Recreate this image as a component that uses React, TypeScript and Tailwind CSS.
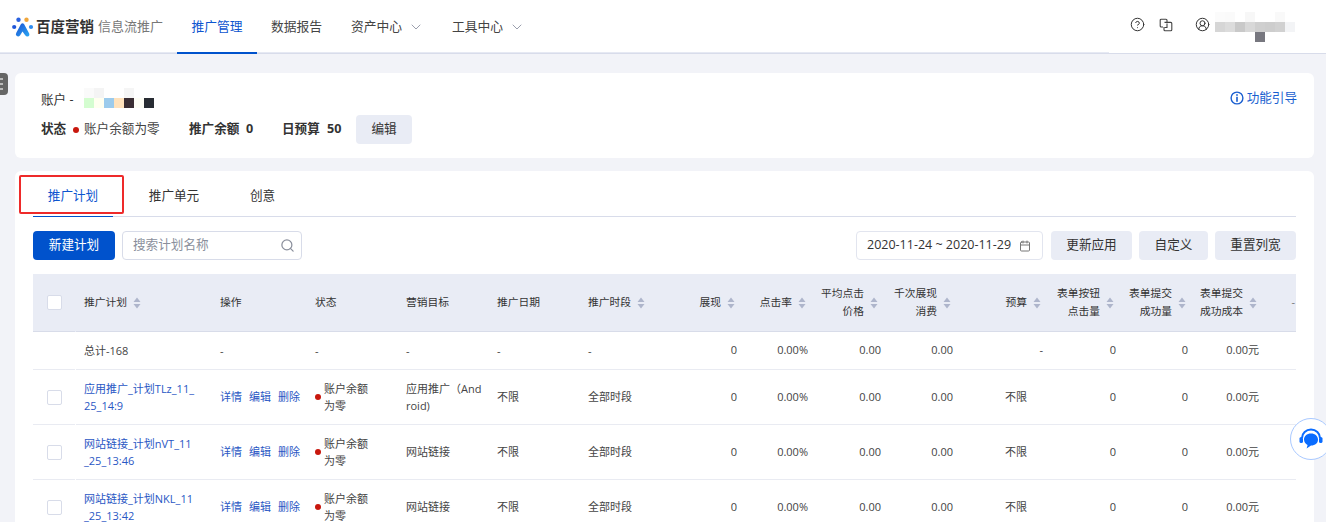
import { CircleHelp, CircleUserRound, ChevronDown, Search, Calendar } from "lucide-react";

const GRID = "grid grid-cols-[43px_136px_95px_91px_91px_91px_91px_74px_71px_73px_72px_90px_73px_72px_72px_28px]";
const CELL = "border-b border-[#e9ebf2] flex items-center";

function Sort() {
  return (
    <svg width="8" height="12" viewBox="0 0 8 12" className="shrink-0">
      <path d="M4 0.5 L7.5 5 H0.5 Z M4 11.5 L0.5 7 H7.5 Z" fill="#aeb5cb" />
    </svg>
  );
}

function Logo() {
  return (
    <svg width="22" height="22" viewBox="0 0 22 22" className="shrink-0">
      <defs>
        <linearGradient id="lg" x1="0" y1="0" x2="1" y2="1">
          <stop offset="0" stopColor="#1d4fd0" />
          <stop offset="1" stopColor="#29a8f5" />
        </linearGradient>
      </defs>
      <circle cx="6.5" cy="3.8" r="2.2" fill="#2a62e0" />
      <circle cx="14.5" cy="3.8" r="2.2" fill="#f0a63c" />
      <circle cx="2.2" cy="11" r="2.1" fill="#1f56d8" />
      <circle cx="19" cy="11" r="2.1" fill="#2f8cf0" />
      <path d="M9 8 Q10.5 6.6 12 8 L17.2 17.5 Q18 20 15.5 20.5 Q14 20.5 13 19 L10.5 15.5 L8 19.5 Q6.5 21 4.8 20 Q3.2 18.8 4.2 17 Z" fill="url(#lg)" />
    </svg>
  );
}

function CopyIcon() {
  return (
    <svg width="14" height="14" viewBox="0 0 14 14" fill="none" stroke="#444" strokeWidth="1.1">
      <path d="M4 9H2.2A1 1 0 0 1 1.2 8V2.2A1 1 0 0 1 2.2 1.2H7A1 1 0 0 1 8 2.2V4" />
      <path d="M5.5 4.4H11.8A1 1 0 0 1 12.8 5.4V11.8A1 1 0 0 1 11.8 12.8H6A1 1 0 0 1 5 11.8V9" />
      <path d="M8 5.5V9.5H5.5" />
    </svg>
  );
}

function Mosaic({ rows, size = 10 }: { rows: string[][]; size?: number }) {
  return (
    <div className="flex flex-col">
      {rows.map((r, i) => (
        <div key={i} className="flex">
          {r.map((c, j) => (
            <div key={j} style={{ width: size, height: size, background: c }} />
          ))}
        </div>
      ))}
    </div>
  );
}

function Head({ children, sort = true, right = true, cls = "" }: { children: React.ReactNode; sort?: boolean; right?: boolean; cls?: string }) {
  return (
    <div className={`border-b border-[#d8dce9] flex items-center gap-[6px] text-[10.75px] leading-[17.5px] text-[#333] ${right ? "justify-end pr-[10px] text-right" : "pl-2"} ${cls}`}>
      <div>{children}</div>
      {sort && <Sort />}
    </div>
  );
}

function Num({ children, cls = "" }: { children: React.ReactNode; cls?: string }) {
  return <div className={`${CELL} justify-end pr-2 text-[11px] text-[#444] ${cls}`}>{children}</div>;
}

function Txt({ children, link = false }: { children: React.ReactNode; link?: boolean }) {
  return <div className={`${CELL} pl-2 text-[11px] leading-[17.5px] ${link ? "text-[#2a57c4]" : "text-[#444]"}`}>{children}</div>;
}

function Check() {
  return <div className="w-[15px] h-[15px] bg-white border border-[#d8dce9] rounded-[2px] ml-[14px]" />;
}

function Row({ l1, l2, goal }: { l1: string; l2: string; goal: React.ReactNode }) {
  return (
    <div className={`${GRID} h-[55px] shrink-0`}>
      <div className={`${CELL} mr-px`}><Check /></div>
      <Txt link><div>{l1}<br />{l2}</div></Txt>
      <div className={`${CELL} pl-2 gap-[7px] text-[11px] text-[#2a57c4]`}><span>详情</span><span>编辑</span><span>删除</span></div>
      <Txt>
        <span className="w-[6px] h-[6px] rounded-full bg-[#c8170d] mr-[3px] shrink-0" />
        <div>账户余额<br />为零</div>
      </Txt>
      <Txt><div>{goal}</div></Txt>
      <Txt>不限</Txt>
      <Txt>全部时段</Txt>
      <Num>0</Num>
      <Num>0.00%</Num>
      <Num>0.00</Num>
      <Num>0.00</Num>
      <div className={`${CELL} pl-[44px] text-[11px] text-[#444]`}>不限</div>
      <Num>0</Num>
      <Num>0</Num>
      <Num cls="pr-[9px]">0.00元</Num>
      <div className={CELL} />
    </div>
  );
}

export default function App() {
  return (
    <div className="relative h-[522px] w-[1326px] overflow-hidden bg-[#f2f3f8] text-[#333] font-['Open_Sans','Noto_Sans_CJK_SC',sans-serif]">
      {/* top bar */}
      <header className="relative h-[54px] bg-white border-b border-[#d8dcea] flex items-stretch pl-3">
        <div className="flex items-center w-[165px] shrink-0">
          <Logo />
          <span className="ml-[2px] text-[14.5px] font-bold text-[#333] whitespace-nowrap">百度营销</span>
          <span className="ml-[4px] text-[13px] text-[#777] whitespace-nowrap">信息流推广</span>
        </div>
        <nav className="flex items-stretch text-[12.75px] text-[#444]">
          <a className="w-[80px] flex items-center justify-center text-[#0d55cf] border-b-2 border-[#0052cc] h-[54px] pt-[2px] z-10">推广管理</a>
          <a className="ml-[14px] flex items-center">数据报告</a>
          <a className="ml-[29px] flex items-center gap-[6px]">资产中心<ChevronDown size={16} strokeWidth={1.3} color="#8b90a0" /></a>
          <a className="ml-[28px] flex items-center gap-[6px]">工具中心<ChevronDown size={16} strokeWidth={1.3} color="#8b90a0" /></a>
        </nav>
        <div className="ml-auto flex items-center pr-[31px]">
          <div className="mb-1"><CircleHelp size={15} color="#333" strokeWidth={1.6} /></div>
          <div className="ml-[14px] mb-1"><CopyIcon /></div>
          <div className="ml-[22px] mb-1"><CircleUserRound size={15} color="#333" strokeWidth={1.6} /></div>
          <div className="ml-[5px]">
            <Mosaic rows={[
              ["#fbfbfb", "#fafafa", "#ffffff", "#f7f7f7", "#ffffff", "#ffffff", "#f9f9f9", "#ffffff"],
              ["#d6d6d6", "#dcdcdc", "#c9c9c9", "#d8d8d8", "#cfcfcf", "#cdcdcd", "#d1d1d1", "#f3f4f6"],
              ["#ffffff", "#ffffff", "#ffffff", "#ffffff", "#77777f", "#ffffff", "#ffffff", "#ffffff"],
            ]} />
          </div>
        </div>
        <div className="absolute left-0 top-[52px] w-[1109px] h-px bg-[#e6e9f3]" />
      </header>

      {/* account card */}
      <section className="ml-[15px] mr-[12px] mt-[19px] h-[85px] bg-white rounded-[6px] pl-[26px] pr-[17px] flex flex-col">
        <div className="flex items-start">
          <div className="flex items-end pt-[15px] h-[35px] text-[12.6px]">
            <span className="w-[43px] leading-[16px]">账户 -</span>
            <Mosaic rows={[
              ["#fafafa", "#f4f4f4", "#ffffff", "#ffffff", "#f5f5f5", "#ffffff", "#ffffff"],
              ["#d4fdd0", "#fffff0", "#9ccbec", "#ffe2bc", "#3a2d33", "#fdfdf5", "#282c33"],
            ]} />
          </div>
          <div className="ml-auto mt-[15px] flex items-center gap-[3px] text-[12.6px] text-[#1a5fd0] leading-[20px]">
            <svg width="14" height="14" viewBox="0 0 14 14">
              <circle cx="7" cy="7" r="5.9" fill="none" stroke="#1a5fd0" strokeWidth="1.4" />
              <rect x="6.2" y="3.2" width="1.6" height="1.6" fill="#1a5fd0" />
              <rect x="6.2" y="5.8" width="1.6" height="5" fill="#1a5fd0" />
            </svg>
            功能引导
          </div>
        </div>
        <div className="flex items-center mt-[7px] text-[12.6px]">
          <span className="font-bold w-[32px]">状态</span>
          <span className="w-[6px] h-[6px] rounded-full bg-[#c8170d] mr-[5px]" />
          <span className="text-[#444] w-[105px]">账户余额为零</span>
          <span className="font-bold w-[57px]">推广余额</span>
          <span className="font-bold w-[36px]">0</span>
          <span className="font-bold w-[45px]">日预算</span>
          <span className="font-bold w-[29px]">50</span>
          <button className="w-[56px] h-[29px] rounded-[4px] bg-[#e9ecf5] text-[#333]">编辑</button>
        </div>
      </section>

      {/* main card */}
      <section className="ml-[15px] mr-[12px] mt-[13px] bg-white rounded-t-[6px] px-[18px] h-[400px] flex flex-col">
        <div className="flex h-[46px] shrink-0 border-b border-[#d8dcea] text-[12.6px]">
          <div className="w-[80px] flex items-center justify-center pt-[5px] text-[#0d55cf] border-b border-[#0052cc] h-[46px]">推广计划</div>
          <div className="w-[80px] ml-[21px] flex items-center justify-center pt-[5px]">推广单元</div>
          <div className="w-[55px] ml-[21px] flex items-center justify-center pt-[5px]">创意</div>
        </div>

        <div className="flex items-center mt-[14px] h-[29px] shrink-0 text-[12.6px]">
          <button className="w-[82px] h-[29px] rounded-[4px] bg-[#0052cc] text-white">新建计划</button>
          <div className="ml-[7px] w-[180px] h-[29px] rounded-[4px] border border-[#d8dce9] flex items-center pl-[10px] pr-[6px] text-[#8a8f9c]">
            <span>搜索计划名称</span>
            <Search size={15} className="ml-auto" color="#8a8f9c" />
          </div>
          <div className="ml-auto w-[187px] h-[29px] rounded-[4px] border border-[#e2e5ef] flex items-center justify-between pl-[10px] pr-[11px] text-[12.5px] text-[#333] whitespace-nowrap">
            <span>2020-11-24 ~ 2020-11-29</span>
            <Calendar size={12} color="#777" />
          </div>
          <button className="ml-[8px] w-[81px] h-[29px] rounded-[4px] bg-[#e9ecf5]">更新应用</button>
          <button className="ml-[7px] w-[69px] h-[29px] rounded-[4px] bg-[#e9ecf5]">自定义</button>
          <button className="ml-[7px] w-[81px] h-[29px] rounded-[4px] bg-[#e9ecf5]">重置列宽</button>
        </div>

        <div className="mt-[14px] flex flex-col overflow-hidden">
          <div className={`${GRID} h-[58px] shrink-0 bg-[#e9ecf5]`}>
            <div className="border-b border-[#d8dce9] flex items-center mr-px"><Check /></div>
            <Head right={false}>推广计划</Head>
            <Head right={false} sort={false}>操作</Head>
            <Head right={false} sort={false}>状态</Head>
            <Head right={false} sort={false}>营销目标</Head>
            <Head right={false} sort={false}>推广日期</Head>
            <Head right={false}>推广时段</Head>
            <Head>展现</Head>
            <Head cls="pr-[9px]">点击率</Head>
            <Head cls="pr-[11px]">平均点击<br />价格</Head>
            <Head>千次展现<br />消费</Head>
            <Head>预算</Head>
            <Head>表单按钮<br />点击量</Head>
            <Head>表单提交<br />成功量</Head>
            <Head cls="pr-[11px]"><div className="text-left">表单提交<br />成功成本</div></Head>
            <div className="border-b border-[#d8dce9] flex items-center justify-end pr-px text-[11px] text-[#777]">-</div>
          </div>
          <div className={`${GRID} h-[38px] shrink-0`}>
            <div className={`${CELL} mr-px`} />
            <Txt>总计-168</Txt>
            <Txt>-</Txt>
            <Txt>-</Txt>
            <Txt>-</Txt>
            <Txt>-</Txt>
            <Txt>-</Txt>
            <Num>0</Num>
            <Num>0.00%</Num>
            <Num>0.00</Num>
            <Num>0.00</Num>
            <Num>-</Num>
            <Num>0</Num>
            <Num>0</Num>
            <Num cls="pr-[9px]">0.00元</Num>
            <div className={CELL} />
          </div>
          <Row l1="应用推广_计划TLz_11_" l2="25_14:9" goal={<>应用推广（And<br />roid)</>} />
          <Row l1="网站链接_计划nVT_11" l2="_25_13:46" goal="网站链接" />
          <Row l1="网站链接_计划NKL_11" l2="_25_13:42" goal="网站链接" />
        </div>
      </section>

      {/* collapsed sidebar handle */}
      <div className="absolute left-0 top-[73px] w-2 h-[22px] rounded-r-[4px] bg-[#666] flex flex-col items-start justify-center gap-[3px]">
        <span className="w-[3px] h-[2px] bg-[#bbb]" />
        <span className="w-[3px] h-[2px] bg-[#bbb]" />
        <span className="w-[3px] h-[2px] bg-[#bbb]" />
      </div>

      {/* annotation */}
      <div className="absolute left-[19px] top-[175px] w-[105px] h-[39px] border-2 border-[#ee2a2a] rounded-[2px]" />

      {/* chat float */}
      <div className="absolute left-[1290px] top-[418px] w-[42px] h-[42px] rounded-full bg-white border border-[#a9c9ff] flex items-center justify-center">
        <svg width="24" height="22" viewBox="0 0 24 22">
          <path d="M3 10 A9 8.5 0 0 1 21 10" fill="none" stroke="#0a6cff" strokeWidth="2" />
          <rect x="0.5" y="9" width="3.5" height="6" rx="1.6" fill="#0a6cff" />
          <rect x="20" y="9" width="3.5" height="6" rx="1.6" fill="#0a6cff" />
          <path d="M12 5.5 C7.8 5.5 5 8.2 5 11.5 C5 14 6.5 16 8.6 17 L7.6 20.5 L12 17.6 C16.3 17.6 19 14.9 19 11.5 C19 8.2 16.2 5.5 12 5.5 Z" fill="#0a6cff" />
        </svg>
      </div>
    </div>
  );
}
